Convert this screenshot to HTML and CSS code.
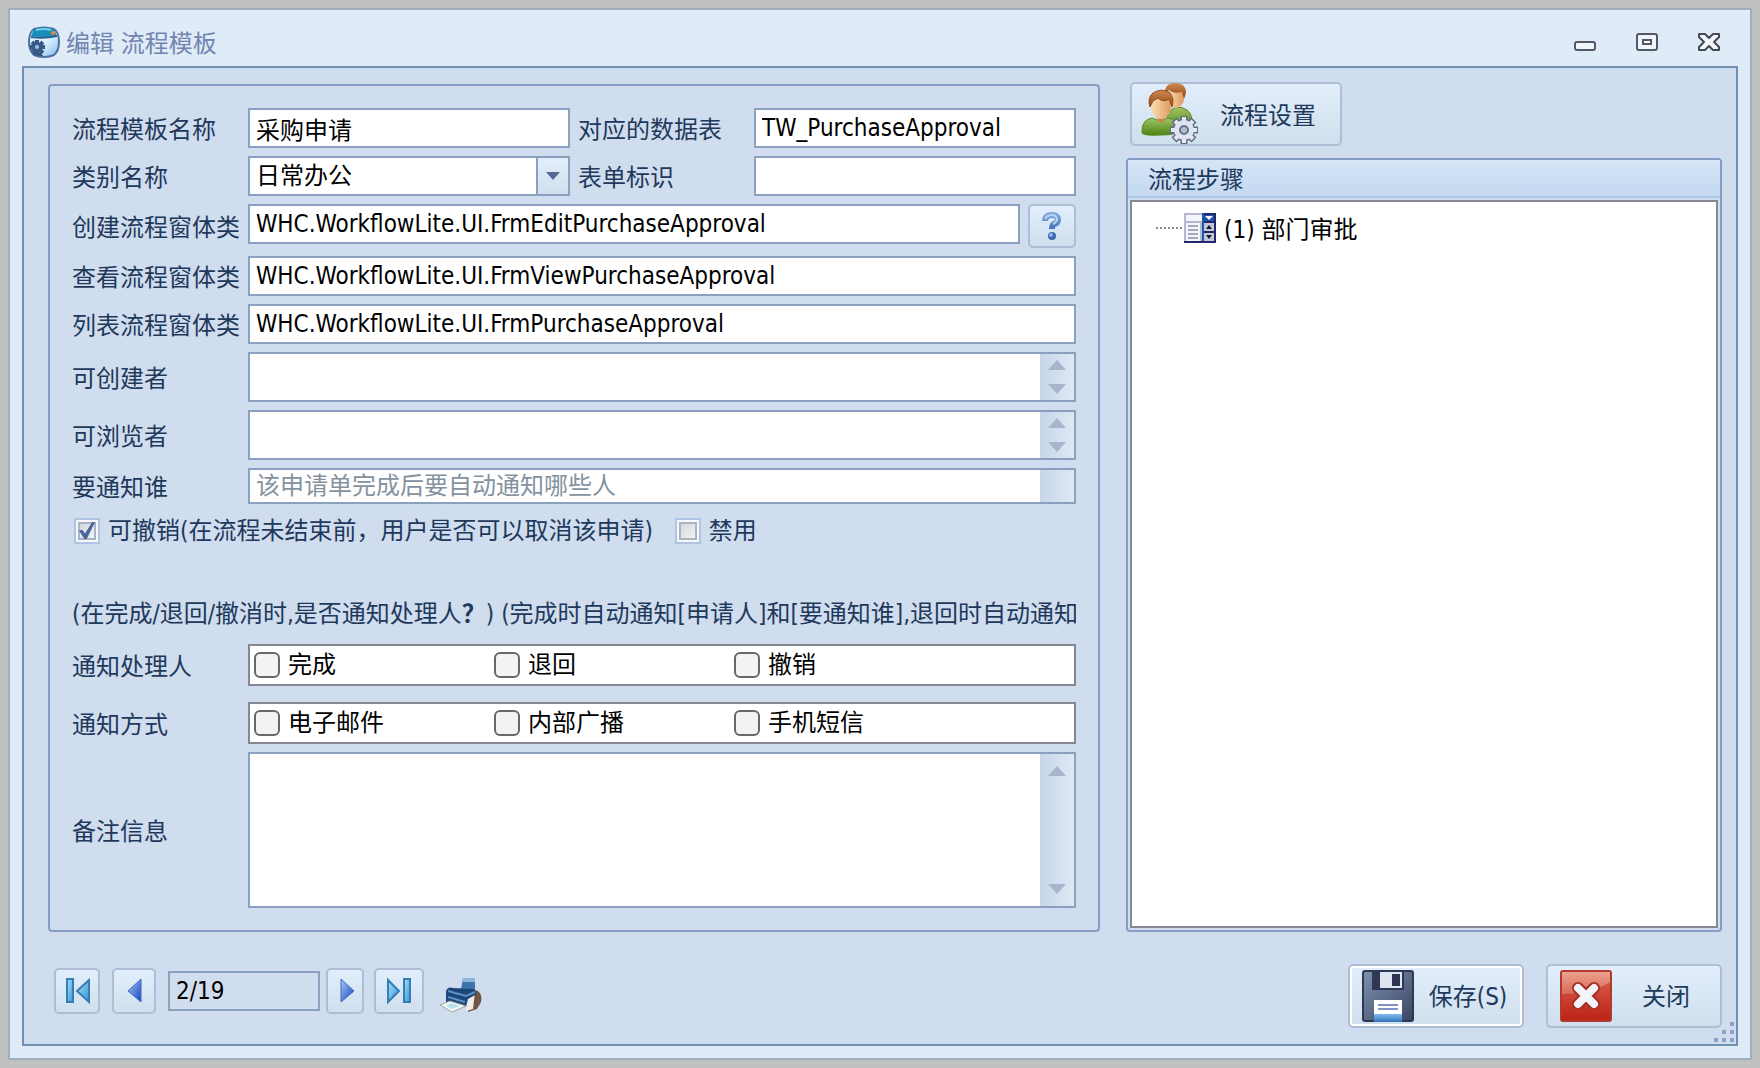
FILE: index.html
```html
<!DOCTYPE html>
<html lang="zh-CN">
  <head>
    <meta charset="UTF-8" />
    <meta name="viewport" content="width=device-width, initial-scale=1.0" />
    <title>编辑 流程模板</title>
    <link rel="stylesheet" href="styles.css">
  </head>
  <body>
    <div class="window">
      <header class="titlebar">
        <svg class="app-icon" width="32" height="32" viewBox="0 0 32 32">
          <defs>
            <linearGradient id="appBody" x1="0" y1="0" x2="1" y2="1">
              <stop offset="0" stop-color="#d4ebfb" />
              <stop offset="0.500" stop-color="#e4f5ff" />
              <stop offset="1" stop-color="#7cb8ec" />
            </linearGradient>
          </defs>
          <path d="M6 3Q16 0 26 3Q31 6 31 16Q31 25 26 29Q16 33 6 29Q1 24 1 16Q1 6 6 3Z" fill="url(#appBody)" stroke="#4a709f" stroke-width="2" />
          <path d="M6 3Q16 0 26 3L29 10Q16 12 3 10Z" fill="#1590bd" />
          <path d="M8 4Q16 2 23 4" fill="none" stroke="#74cce6" stroke-width="2" />
          <path d="M3 11Q16 13 29 10" fill="none" stroke="#2c5f92" stroke-width="2" />
          <circle cx="25" cy="7" r="2" fill="#f58a28" />
          <path d="M9 14V28M2 21H17M4 16L15 27M15 16L4 26" stroke="#3a5a88" stroke-width="4" />
          <circle cx="9" cy="21" r="5" fill="#3a5a88" />
          <circle cx="9" cy="21" r="2" fill="#9cc4e8" />
          <path d="M5 26Q12 24 15 30Q8 30 5 28Z" fill="#36577f" />
        </svg>
        <h1>编辑 流程模板</h1>
        <div class="window-controls">
          <button type="button" aria-label="最小化">
            <svg width="22" height="22" viewBox="0 0 22 22">
              <rect x="1" y="11" width="20" height="8" rx="2" fill="#f1f6fb" stroke="#545868" stroke-width="2" />
            </svg>
          </button>
          <button type="button" aria-label="最大化">
            <svg width="22" height="22" viewBox="0 0 22 22">
              <rect x="1" y="3" width="20" height="16" rx="2" fill="#f1f6fb" stroke="#545868" stroke-width="2" />
              <rect x="7" y="9" width="8" height="4" fill="#fff" stroke="#545868" stroke-width="2" />
            </svg>
          </button>
          <button type="button" aria-label="关闭窗口">
            <svg width="22" height="22" viewBox="0 0 22 22">
              <path d="M1 3H7L11 7L15 3H21V6L16 11L21 16V19H15L11 15L7 19H1V16L6 11L1 6Z" fill="#f1f6fb" stroke="#454856" stroke-width="2" stroke-linejoin="round" />
            </svg>
          </button>
        </div>
      </header>

      <main class="client">
        <div class="columns">
          <form class="template-form">
            <div class="row row-pair">
              <label for="name">流程模板名称</label>
              <input class="field" id="name" type="text" value="采购申请" />
              <label class="second" for="table">对应的数据表</label>
              <input class="field" id="table" type="text" value="TW_PurchaseApproval" />
            </div>
            <div class="row row-pair">
              <label for="category">类别名称</label>
              <div class="combo">
                <select class="field" id="category">
                  <option>日常办公</option>
                </select>
                <span class="combo-arrow"></span>
              </div>
              <label class="second" for="mark">表单标识</label>
              <input class="field" id="mark" type="text" />
            </div>
            <div class="row row-help">
              <label for="createForm">创建流程窗体类</label>
              <input class="field" id="createForm" type="text" value="WHC.WorkflowLite.UI.FrmEditPurchaseApproval" />
              <button class="btn help-btn" type="button" aria-label="帮助">
                <svg width="22" height="30" viewBox="0 0 22 30">
                  <defs>
                    <linearGradient id="helpBlue" x1="0" y1="0" x2="0" y2="1">
                      <stop offset="0" stop-color="#7fa9da" />
                      <stop offset="1" stop-color="#3f73ba" />
                    </linearGradient>
                  </defs>
                  <path d="M4 10Q4 4 11 4Q17 4 17 9Q17 12 13 13Q11 14 11 18" fill="none" stroke="url(#helpBlue)" stroke-width="6" />
                  <path d="M4 8Q6 4 11 4Q15 4 16 8Q16 11 12 13" fill="none" stroke="#b9d4f0" stroke-width="2" />
                  <circle cx="11" cy="25" r="4" fill="#3c69b0" />
                  <circle cx="10" cy="24" r="2" fill="#8fb8e6" />
                </svg>
              </button>
            </div>
            <div class="row">
              <label for="viewForm">查看流程窗体类</label>
              <input class="field" id="viewForm" type="text" value="WHC.WorkflowLite.UI.FrmViewPurchaseApproval" />
            </div>
            <div class="row">
              <label for="listForm">列表流程窗体类</label>
              <input class="field" id="listForm" type="text" value="WHC.WorkflowLite.UI.FrmPurchaseApproval" />
            </div>
            <div class="row">
              <label for="creators">可创建者</label>
              <div class="memo memo-two">
                <textarea id="creators"></textarea>
                <div class="scrollbar"><span class="up"></span><span class="down"></span></div>
              </div>
            </div>
            <div class="row">
              <label for="viewers">可浏览者</label>
              <div class="memo memo-two">
                <textarea id="viewers"></textarea>
                <div class="scrollbar"><span class="up"></span><span class="down"></span></div>
              </div>
            </div>
            <div class="row">
              <label for="notify">要通知谁</label>
              <div class="memo memo-one">
                <textarea id="notify" placeholder="该申请单完成后要自动通知哪些人"></textarea>
                <div class="scrollbar"></div>
              </div>
            </div>
            <div class="flags">
              <label><input class="check" type="checkbox" checked />可撤销(在流程未结束前，用户是否可以取消该申请)</label>
              <label><input class="check" type="checkbox" />禁用</label>
            </div>
            <p class="note">(在完成/退回/撤消时,是否通知处理人<b>？</b>) (完成时自动通知[申请人]和[要通知谁],退回时自动通知</p>
            <div class="row row-handlers">
              <span class="caption" id="handlers">通知处理人</span>
              <div class="options" role="group" aria-labelledby="handlers">
                <label><input type="checkbox" />完成</label>
                <label><input type="checkbox" />退回</label>
                <label><input type="checkbox" />撤销</label>
              </div>
            </div>
            <div class="row">
              <span class="caption" id="methods">通知方式</span>
              <div class="options" role="group" aria-labelledby="methods">
                <label><input type="checkbox" />电子邮件</label>
                <label><input type="checkbox" />内部广播</label>
                <label><input type="checkbox" />手机短信</label>
              </div>
            </div>
            <div class="row row-fill">
              <label for="remark">备注信息</label>
              <div class="memo">
                <textarea id="remark"></textarea>
                <div class="scrollbar"><span class="up"></span><span class="down"></span></div>
              </div>
            </div>
          </form>

          <aside class="side">
            <button class="btn setup-btn" type="button">
              <svg width="60" height="62" viewBox="0 0 60 62">
                <defs>
                  <linearGradient id="hair" x1="0" y1="0" x2="0" y2="1">
                    <stop offset="0" stop-color="#d08c50" />
                    <stop offset="1" stop-color="#8f4212" />
                  </linearGradient>
                  <linearGradient id="face" x1="0" y1="0" x2="1" y2="0">
                    <stop offset="0" stop-color="#fbdcb2" />
                    <stop offset="1" stop-color="#dd9b60" />
                  </linearGradient>
                  <linearGradient id="shirt" x1="0" y1="0" x2="0" y2="1">
                    <stop offset="0" stop-color="#a2c567" />
                    <stop offset="1" stop-color="#4b8213" />
                  </linearGradient>
                </defs>
                <path d="M25 47Q26 27 36 24Q50 24 52 36V45Z" fill="url(#shirt)" stroke="#5b8b24" />
                <ellipse cx="36" cy="15" rx="8" ry="10" fill="url(#face)" />
                <path d="M25 11Q24 0 36 0Q46 0 46 10L44 16L42 9Q33 11 29 7Z" fill="url(#hair)" />
                <path d="M2 50Q1 37 12 35L20 38L28 35Q38 37 39 48Q36 52 21 52Q4 53 2 50Z" fill="url(#shirt)" stroke="#5b8b24" />
                <path d="M16 30H26L24 38Q21 41 18 38Z" fill="#c98549" />
                <ellipse cx="21" cy="24" rx="10" ry="12" fill="url(#face)" />
                <path d="M10 24Q7 15 13 10Q21 5 29 9Q35 15 32 24L29 16Q23 20 18 15L13 18Z" fill="url(#hair)" stroke="#984d1e" />
                <g stroke="#5f6c86" stroke-width="7">
                  <path d="M44 33V61M30 47H58M34 37L54 57M54 37L34 57" />
                </g>
                <circle cx="44" cy="47" r="11" fill="#5f6c86" />
                <g stroke="#e4e9f2" stroke-width="4">
                  <path d="M44 34V60M31 47H57M35 38L53 56M53 38L35 56" />
                </g>
                <circle cx="44" cy="47" r="10" fill="#dfe5ef" />
                <circle cx="44" cy="47" r="4" fill="#b4bfd0" stroke="#66758f" stroke-width="2" />
              </svg>
              <span>流程设置</span>
            </button>
            <section class="steps">
              <h2>流程步骤</h2>
              <ul class="tree">
                <li>
                  <span class="branch"></span>
                  <svg width="32" height="30" viewBox="0 0 32 30">
                    <rect x="0" y="0" width="32" height="30" fill="#22266a" />
                    <rect x="0" y="0" width="18" height="28" fill="#b4b8d2" />
                    <rect x="2" y="2" width="16" height="6" fill="#f5f5f8" />
                    <rect x="2" y="10" width="14" height="18" fill="#f3f5fa" />
                    <path d="M4 13H14M4 17H14M4 21H14M4 25H14" stroke="#a5a8b8" stroke-width="2" />
                    <rect x="18" y="0" width="2" height="28" fill="#1f57aa" />
                    <rect x="20" y="2" width="10" height="6" fill="#1c58a6" />
                    <path d="M21 3H29L25 7Z" fill="#fff" />
                    <rect x="20" y="10" width="10" height="8" fill="#c4c8d4" />
                    <path d="M22 16H28L25 12Z" fill="#121636" />
                    <rect x="20" y="20" width="10" height="8" fill="#c4c8d4" />
                    <path d="M22 22H28L25 26Z" fill="#121636" />
                  </svg>
                  <span class="node">(1) 部门审批</span>
                </li>
              </ul>
            </section>
          </aside>
        </div>

        <footer class="bottom-bar">
          <div class="pager">
            <svg class="defs" width="0" height="0">
              <defs>
                <linearGradient id="cyan" x1="0" y1="0" x2="1" y2="1">
                  <stop offset="0" stop-color="#a8e2fb" />
                  <stop offset="1" stop-color="#3594d6" />
                </linearGradient>
                <linearGradient id="blue" x1="0" y1="0" x2="1" y2="1">
                  <stop offset="0" stop-color="#a8c8f5" />
                  <stop offset="1" stop-color="#1443bb" />
                </linearGradient>
              </defs>
            </svg>
            <button class="btn first" type="button" aria-label="第一条">
              <svg width="26" height="28" viewBox="0 0 26 28">
                <rect x="3" y="2" width="6" height="23" fill="url(#cyan)" stroke="#347eb4" stroke-width="2" />
                <path d="M25 3V25L13 14Z" fill="url(#cyan)" stroke="#347eb4" stroke-width="2" />
              </svg>
            </button>
            <button class="btn prev" type="button" aria-label="上一条">
              <svg width="16" height="28" viewBox="0 0 16 28">
                <path d="M15 2V25L2 14Z" fill="url(#blue)" stroke="#3a6bd0" />
              </svg>
            </button>
            <input class="field position" type="text" value="2/19" aria-label="当前记录" />
            <button class="btn next" type="button" aria-label="下一条">
              <svg width="16" height="28" viewBox="0 0 16 28">
                <path d="M1 2V25L14 14Z" fill="url(#blue)" stroke="#3a6bd0" />
              </svg>
            </button>
            <button class="btn last" type="button" aria-label="最后一条">
              <svg width="26" height="28" viewBox="0 0 26 28">
                <path d="M2 3V25L13 14Z" fill="url(#cyan)" stroke="#347eb4" stroke-width="2" />
                <rect x="18" y="2" width="6" height="23" fill="url(#cyan)" stroke="#347eb4" stroke-width="2" />
              </svg>
            </button>
            <button class="print-btn" type="button" aria-label="打印">
              <svg width="44" height="38" viewBox="0 0 44 38">
                <path d="M25 2H37V16L23 14Z" fill="#3f74aa" />
                <path d="M25 2H37V6H25Z" fill="#8fb9dc" />
                <path d="M30 20L37 14Q45 16 43 26L39 33L30 36Z" fill="#705547" />
                <path d="M28 22L37 16L35 33L28 35Z" fill="#f1ece8" />
                <path d="M8 15Q10 10 15 12L36 13L39 18L30 23L28 31L8 26Z" fill="#1c4679" />
                <path d="M10 15L28 20L37 16M10 21L27 26" fill="none" stroke="#5e90c1" stroke-width="2" />
                <path d="M2 29L12 25L28 30L14 36Z" fill="#f3f8f6" stroke="#a5a29e" />
                <path d="M8 30L13 27L22 30L14 33Z" fill="#b8e2e8" />
              </svg>
            </button>
          </div>
          <div class="actions">
            <button class="btn action save" type="submit">
              <svg width="52" height="52" viewBox="0 0 52 52">
                <defs>
                  <linearGradient id="disk" x1="0" y1="0" x2="1" y2="1">
                    <stop offset="0" stop-color="#7d93b0" />
                    <stop offset="1" stop-color="#3a4462" />
                  </linearGradient>
                  <linearGradient id="strip" x1="0" y1="0" x2="0" y2="1">
                    <stop offset="0" stop-color="#7cbcec" />
                    <stop offset="1" stop-color="#3673bd" />
                  </linearGradient>
                </defs>
                <rect x="1" y="1" width="50" height="50" rx="2" fill="url(#disk)" stroke="#2f3854" stroke-width="2" />
                <rect x="10" y="0" width="32" height="20" fill="#2e3753" />
                <rect x="18" y="2" width="22" height="16" fill="#dce5f0" />
                <rect x="30" y="4" width="8" height="12" fill="#2c3450" />
                <rect x="12" y="30" width="28" height="14" fill="#fff" />
                <path d="M16 35H36M16 39H36" stroke="#8292c4" stroke-width="2" />
                <rect x="12" y="44" width="28" height="8" fill="url(#strip)" />
              </svg>
              <span>保存(S)</span>
            </button>
            <button class="btn action" type="button">
              <svg width="52" height="52" viewBox="0 0 52 52">
                <defs>
                  <linearGradient id="red" x1="0" y1="0" x2="0" y2="1">
                    <stop offset="0" stop-color="#dc6450" />
                    <stop offset="1" stop-color="#bb2216" />
                  </linearGradient>
                  <linearGradient id="shine" x1="0" y1="0" x2="0" y2="1">
                    <stop offset="0" stop-color="#f3baa9" />
                    <stop offset="1" stop-color="#e07a67" />
                  </linearGradient>
                </defs>
                <rect x="1" y="1" width="50" height="50" rx="2" fill="url(#red)" stroke="#b03a30" stroke-width="2" />
                <path d="M2 2H50V12Q30 24 2 24Z" fill="url(#shine)" opacity="0.700" />
                <path d="M18 18L34 34M34 18L18 34" stroke="#a52e28" stroke-width="12" stroke-linecap="round" />
                <path d="M18 18L34 34M34 18L18 34" stroke="#f2f4f8" stroke-width="8" stroke-linecap="round" />
              </svg>
              <span>关闭</span>
            </button>
          </div>
        </footer>
        <svg class="grip" width="20" height="20" viewBox="0 0 20 20">
          <path d="M16 0h4v4h-4zM8 8h4v4h-4zM16 8h4v4h-4zM0 16h4v4h-4zM8 16h4v4h-4zM16 16h4v4h-4z" fill="#8aa3c8" />
        </svg>
      </main>
    </div>
  </body>
</html>
```
FILE: styles.css
```css
* {
  box-sizing: border-box;
}
body {
  margin: 0;
  padding: 8px;
  min-height: 100vh;
  display: flex;
  background: #c0c0c0;
  color: #1e395b;
  font-family: "DejaVu Sans Condensed", "Noto Sans CJK SC", sans-serif;
  font-size: 24px;
  line-height: 32px;
}
button,
input,
select,
textarea {
  font: inherit;
  color: inherit;
}
h1,
h2,
p,
ul {
  margin: 0;
  padding: 0;
  font-size: 24px;
  font-weight: normal;
}

/* window frame */
.window {
  flex: 1;
  min-width: 0;
  display: flex;
  flex-direction: column;
  padding: 0 12px 12px;
  background: #dfebf7;
  border: 2px solid #a0aebd;
}
.titlebar {
  display: flex;
  align-items: center;
  height: 56px;
  padding: 8px 18px 0 6px;
}
.titlebar h1 {
  margin-left: 6px;
  padding-top: 4px;
  color: #7185b0;
}
.window-controls {
  display: flex;
  gap: 40px;
  margin-left: auto;
}
.window-controls button {
  display: flex;
  padding: 0;
  border: none;
  background: none;
}
.client {
  flex: 1;
  position: relative;
  display: flex;
  flex-direction: column;
  padding: 14px 14px 16px 24px;
  background: #d0ddee;
  border: 2px solid #7291b0;
}
.columns {
  flex: 1;
  display: grid;
  grid-template-columns: minmax(0, 1fr) 596px;
  gap: 26px;
}

/* buttons */
.btn {
  display: flex;
  align-items: center;
  justify-content: center;
  padding: 0;
  border: 2px solid #afbdd6;
  border-radius: 5px;
  background: linear-gradient(#e2eefc, #d0dfed);
}

/* form */
.template-form {
  display: flex;
  flex-direction: column;
  gap: 8px;
  margin-top: 2px;
  padding: 22px;
  border: 2px solid #849ec3;
  border-radius: 4px;
}
.row {
  display: grid;
  grid-template-columns: 176px minmax(0, 1fr);
}
.row-pair {
  grid-template-columns: 176px minmax(0, 1fr) 184px minmax(0, 1fr);
}
.row-help {
  grid-template-columns: 176px minmax(0, 1fr) 56px;
}
.row > label,
.caption {
  align-self: center;
  padding-top: 4px;
  white-space: nowrap;
}
.row > .second {
  padding-left: 8px;
}
.field {
  width: 100%;
  height: 40px;
  padding: 0 6px;
  border: 2px solid #8ba0bf;
  border-radius: 0;
  background: #fff;
  color: #000;
}
.help-btn {
  width: 48px;
  height: 44px;
  margin-left: 8px;
}
.combo {
  position: relative;
}
.combo select {
  appearance: none;
}
.combo-arrow {
  position: absolute;
  top: 2px;
  right: 2px;
  bottom: 2px;
  width: 32px;
  border-left: 2px solid #8ba0bf;
  background: linear-gradient(#e2eefc, #d0dfed);
  pointer-events: none;
}
.combo-arrow::before {
  content: "";
  display: block;
  margin: 14px auto 0;
  width: 14px;
  height: 8px;
  background: #566a94;
  clip-path: polygon(0 0, 100% 0, 50% 100%);
}
.memo {
  display: flex;
  border: 2px solid #8ba0bf;
  background: #fff;
}
.memo textarea {
  flex: 1;
  min-width: 0;
  height: 100%;
  padding: 0 6px;
  border: none;
  background: none;
  color: #000;
  resize: none;
  overflow: hidden;
}
.memo textarea::placeholder {
  color: #8492a0;
}
.memo-two {
  height: 50px;
}
.memo-one {
  height: 36px;
}
.scrollbar {
  width: 34px;
  padding: 6px 0;
  display: flex;
  flex-direction: column;
  align-items: center;
  justify-content: space-between;
  background: linear-gradient(to right, #c6d6e8, #dde8f4);
}
.scrollbar span {
  width: 18px;
  height: 10px;
  background: #a8b5cd;
}
.up {
  clip-path: polygon(50% 0, 100% 100%, 0 100%);
}
.down {
  clip-path: polygon(0 0, 100% 0, 50% 100%);
}
.row-fill {
  flex: 1;
}
.row-fill .scrollbar {
  padding: 12px 0;
}

/* check boxes */
.flags {
  display: flex;
  align-items: center;
  gap: 20px;
  height: 38px;
}
.flags label {
  display: flex;
  align-items: center;
  white-space: nowrap;
}
.check {
  appearance: none;
  width: 26px;
  height: 26px;
  margin: 0 8px 0 2px;
  border: 2px solid #afc4e4;
  background: linear-gradient(135deg, #d4d8e0, #f1f2f4) center / 14px 14px no-repeat #f6f8fa;
  outline: 2px solid #a9b3c1;
  outline-offset: -6px;
}
.check:checked {
  position: relative;
}
.check:checked::before {
  content: "";
  position: absolute;
  inset: 2px 3px 3px 3px;
  background: #45659b;
  clip-path: polygon(0 50%, 20% 45%, 38% 68%, 82% 0, 100% 0, 48% 100%, 34% 100%);
}
.note {
  height: 32px;
  margin: 40px 0 6px;
  overflow: hidden;
  white-space: nowrap;
}
.options {
  display: flex;
  height: 42px;
  padding: 0 4px;
  border: 2px solid #848892;
  background: #fff;
  color: #000;
}
.options label {
  display: flex;
  align-items: center;
  width: 240px;
}
.options input {
  appearance: none;
  width: 26px;
  height: 26px;
  margin: 0 8px 0 0;
  border: 2px solid #686868;
  border-radius: 6px;
  background: #f3f3f3;
}
.row-handlers {
  margin-bottom: 8px;
}

/* right side */
.side {
  display: flex;
  flex-direction: column;
  align-items: flex-start;
  gap: 12px;
}
.setup-btn {
  justify-content: flex-start;
  gap: 20px;
  width: 212px;
  height: 64px;
  margin-left: 4px;
  padding: 0 8px;
}
.setup-btn span {
  padding-top: 4px;
}
.steps {
  flex: 1;
  align-self: stretch;
  display: flex;
  flex-direction: column;
  border: 2px solid #849ec3;
  border-radius: 4px;
}
.steps h2 {
  height: 38px;
  padding: 4px 20px 0;
  border-bottom: 2px solid #aac6e0;
  background: linear-gradient(#d6e6f8, #c4d8f0);
}
.tree {
  flex: 1;
  margin: 2px;
  padding: 8px 24px;
  border: 2px solid #848892;
  background: #fff;
  color: #000;
  list-style: none;
}
.tree li {
  display: flex;
  align-items: center;
}
.branch {
  width: 26px;
  margin-right: 2px;
  border-top: 2px dotted #888;
}
.node {
  margin-left: 8px;
  padding-top: 4px;
}

/* bottom bar */
.bottom-bar {
  display: flex;
  justify-content: space-between;
  margin-top: 32px;
}
.pager {
  display: flex;
  align-items: center;
  height: 54px;
  padding-left: 6px;
}
.defs {
  position: absolute;
}
.pager .btn {
  height: 46px;
}
.first {
  width: 46px;
  margin-right: 12px;
}
.prev {
  width: 44px;
  margin-right: 12px;
}
.pager .position {
  width: 152px;
  margin-right: 6px;
  background: none;
}
.next {
  width: 38px;
  margin-right: 10px;
  padding-left: 6px;
}
.last {
  width: 50px;
  margin-right: 14px;
}
.print-btn {
  align-self: flex-end;
  display: flex;
  padding: 0 0 4px;
  border: none;
  background: none;
}
.actions {
  display: flex;
  gap: 22px;
}
.action {
  justify-content: flex-start;
  width: 176px;
  height: 64px;
  padding-left: 12px;
}
.action span {
  flex: 1;
  padding-top: 2px;
  text-align: center;
}
.save {
  box-shadow: inset 0 0 0 2px #fff;
}
.grip {
  position: absolute;
  right: 2px;
  bottom: 2px;
}
```
